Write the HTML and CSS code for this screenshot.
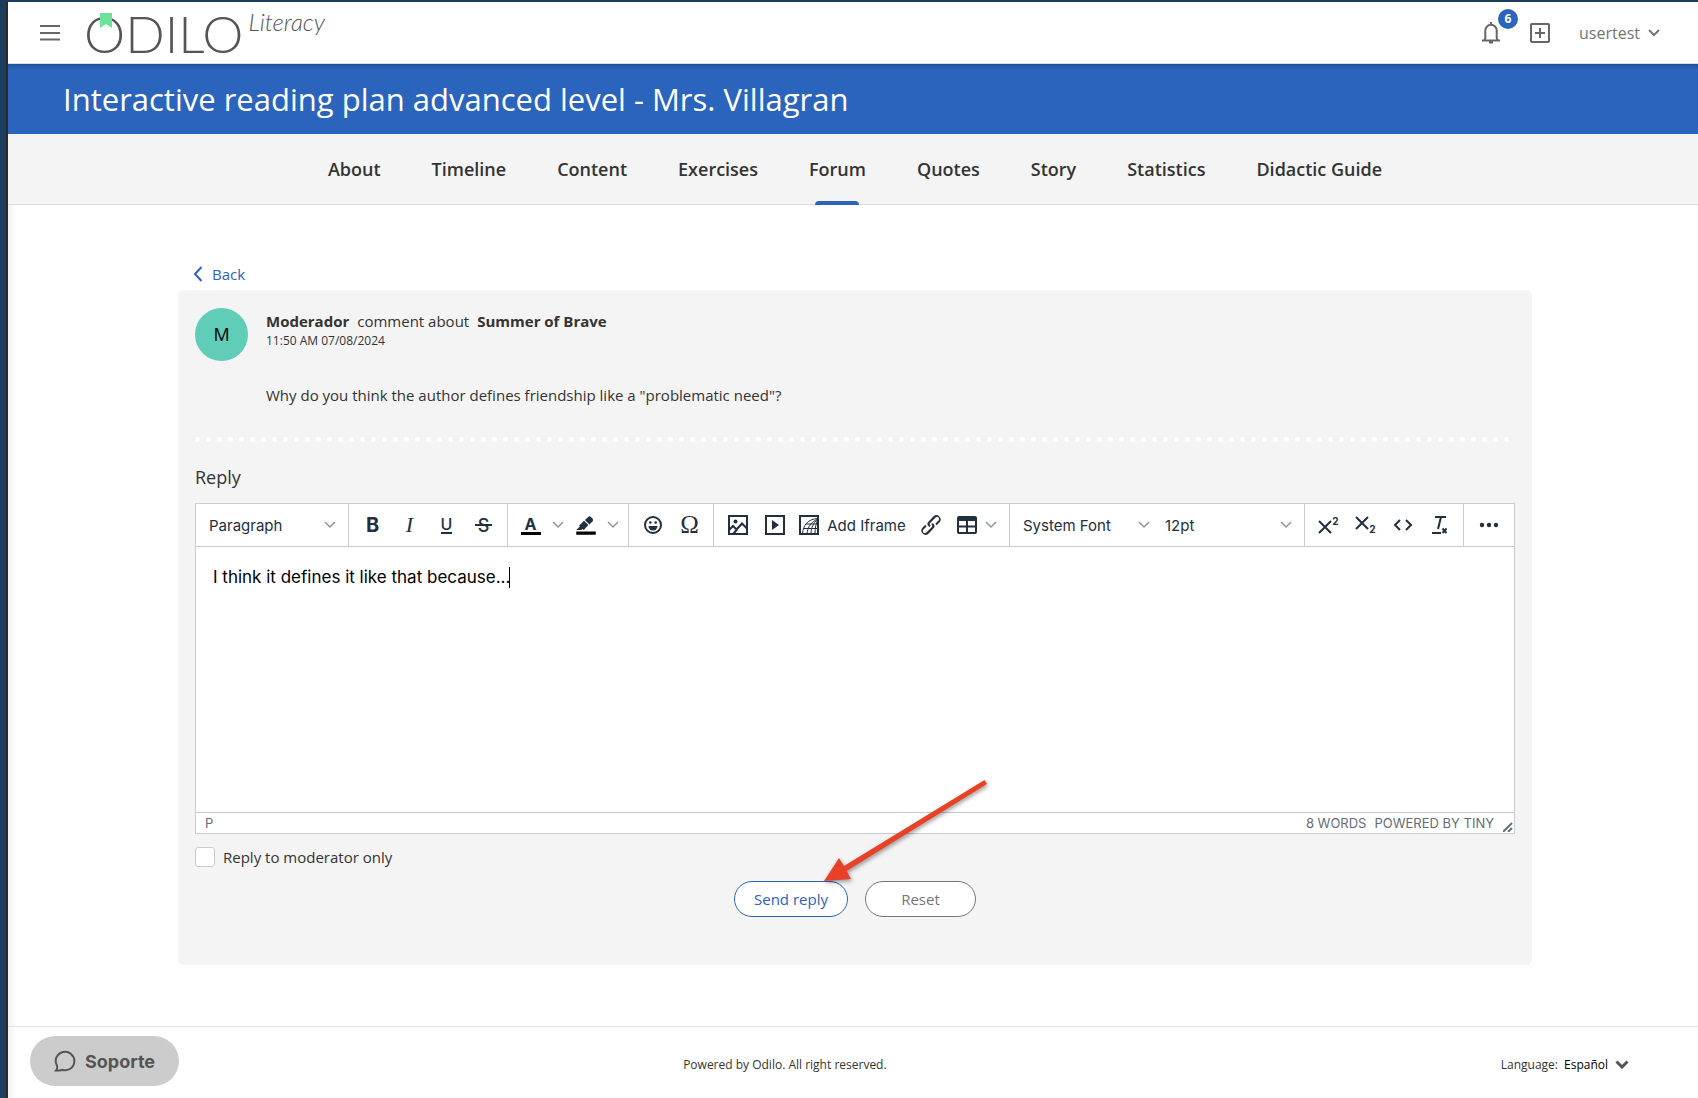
FILE: index.html
```html
<!DOCTYPE html>
<html lang="en">
<head>
    <meta charset="UTF-8">
    <meta name="viewport" content="width=device-width, initial-scale=1.0">
    <title>Forum - Odilo Literacy</title>
    <link rel="stylesheet" href="styles.css">
</head>
<body>
    <div class="page">
        <header class="header">
            <button class="icon-button menu" aria-label="Menu">
                <svg width="20" height="20" viewBox="0 0 20 20"><path d="M0 3h20M0 10h20M0 16.500h20"/></svg>
            </button>
            <a class="logo" href="#">
                <span class="logo-name">ODILO</span>
                <span class="logo-product">Literacy</span>
                <svg class="logo-mark" width="12" height="15" viewBox="0 0 12 15"><path d="M0 0h12v15l-6-4-6 4z"/></svg>
            </a>
            <div class="header-right">
                <button class="icon-button bell" aria-label="Notifications">
                    <svg width="20" height="22" viewBox="0 0 20 22"><path d="M1 18.500h18M3.500 18l.8-2V8.500a5.700 5.700 0 0 1 11.400 0V16l.8 2M10 3V0M8 20.500h4"/></svg>
                    <span class="badge">6</span>
                </button>
                <button class="icon-button" aria-label="Add">
                    <svg width="20" height="20" viewBox="0 0 20 20"><rect x="1" y="1" width="18" height="18" rx="1"/><path d="M10 5v10M5 10h10"/></svg>
                </button>
                <button class="user">usertest
                    <svg width="12" height="8" viewBox="0 0 12 8"><path d="M1 1l5 5 5-5"/></svg>
                </button>
            </div>
        </header>

        <h1 class="banner">Interactive reading plan advanced level - Mrs. Villagran</h1>

        <nav class="tabs">
            <a href="#">About</a>
            <a href="#">Timeline</a>
            <a href="#">Content</a>
            <a href="#">Exercises</a>
            <a href="#" class="active">Forum</a>
            <a href="#">Quotes</a>
            <a href="#">Story</a>
            <a href="#">Statistics</a>
            <a href="#">Didactic Guide</a>
        </nav>

        <main class="main">
            <a class="back" href="#">
                <svg width="10" height="16" viewBox="0 0 10 16"><path d="M8.500 1L2 8l6.500 7"/></svg>
                Back
            </a>
            <section class="card">
                <article class="comment">
                    <div class="avatar">M</div>
                    <div class="comment-content">
                        <p class="comment-title"><b>Moderador</b><span>comment about</span><b>Summer of Brave</b></p>
                        <p class="comment-date">11:50 AM 07/08/2024</p>
                        <p class="comment-text">Why do you think the author defines friendship like a "problematic need"?</p>
                    </div>
                </article>
                <div class="dots"></div>

                <form>
                    <label class="reply-label" for="reply">Reply</label>
                    <div class="editor">
                        <div class="toolbar">
                            <div class="group">
                                <div class="picker">
                                    <select aria-label="Block"><option>Paragraph</option></select>
                                    <svg class="chevron" width="12" height="8" viewBox="0 0 12 8"><path d="M1 1l5 5 5-5"/></svg>
                                </div>
                            </div>
                            <div class="group">
                                <button type="button" class="tool bold">B</button>
                                <button type="button" class="tool italic">I</button>
                                <button type="button" class="tool underline"><span>U</span></button>
                                <button type="button" class="tool strike"><span>S</span></button>
                            </div>
                            <div class="group">
                                <button type="button" class="tool split">
                                    <span class="text-color">A</span>
                                    <svg class="chevron" width="12" height="8" viewBox="0 0 12 8"><path d="M1 1l5 5 5-5"/></svg>
                                </button>
                                <button type="button" class="tool split" aria-label="Background color">
                                    <svg class="solid" width="26" height="26" viewBox="0 0 24 24"><path d="M3 18h18v3H3z" fill="#000"/><path d="M7.700 16.700H3l3.300-3.300-.7-.8L10.200 8l4 4.100-4 4.200c-.2.2-.6.2-.8 0l-.6-.7-1.100 1.100zm5-7.500L11 7.400l3-2.900a2 2 0 0 1 2.600 0L18 6c.7.7.7 2 0 2.700l-2.900 2.900-1.800-1.800-.5-.6"/></svg>
                                    <svg class="chevron" width="12" height="8" viewBox="0 0 12 8"><path d="M1 1l5 5 5-5"/></svg>
                                </button>
                            </div>
                            <div class="group">
                                <button type="button" class="tool" aria-label="Emojis">
                                    <svg width="20" height="20" viewBox="0 0 20 20"><circle cx="10" cy="10" r="8"/><g class="solid"><circle cx="7.300" cy="7.500" r="1.300"/><circle cx="12.700" cy="7.500" r="1.300"/><path d="M5.500 11h9a4.500 4.500 0 0 1-9 0z"/></g></svg>
                                </button>
                                <button type="button" class="tool omega">&Omega;</button>
                            </div>
                            <div class="group">
                                <button type="button" class="tool" aria-label="Image">
                                    <svg width="20" height="20" viewBox="0 0 20 20"><rect x="1" y="1" width="18" height="18"/><circle class="solid" cx="7.500" cy="6.500" r="2"/><path d="M1 15l4-4 3.500 3.500L14 8.500l5 5M5 19l4-4.500"/></svg>
                                </button>
                                <button type="button" class="tool" aria-label="Media">
                                    <svg width="20" height="20" viewBox="0 0 20 20"><rect x="1" y="1" width="18" height="18"/><path class="solid" d="M7 5l7 5-7 5z"/></svg>
                                </button>
                                <button type="button" class="tool iframe">
                                    <svg width="20" height="20" viewBox="0 0 20 20"><rect x="1" y="1" width="18" height="18"/><g class="thin"><path d="M3.500 19C4 10 9 4 19 3.500M8 19c.5-7 4-12 11-15M12 19c0-6 2-11 7-15M16 19c0-6 1-11 3-15M7 9h12M5 13.500h14"/></g></svg>
                                    Add Iframe
                                </button>
                                <button type="button" class="tool" aria-label="Link">
                                    <svg class="solid" width="26" height="26" viewBox="0 0 24 24"><path d="M6.200 12.300a1 1 0 0 1 1.400 1.400l-2 2a2 2 0 1 0 2.600 2.800l4.800-4.800a1 1 0 0 0 0-1.400 1 1 0 1 1 1.400-1.300 2.900 2.900 0 0 1 0 4L9.600 20a3.900 3.900 0 0 1-5.500-5.500l2-2zm11.600-.6a1 1 0 0 1-1.400-1.400l2-2a2 2 0 1 0-2.600-2.800L11 10.300a1 1 0 0 0 0 1.400A1 1 0 1 1 9.600 13a2.900 2.900 0 0 1 0-4L14.400 4a3.900 3.900 0 0 1 5.500 5.500l-2 2z"/></svg>
                                </button>
                                <button type="button" class="tool split" aria-label="Table">
                                    <svg width="20" height="18" viewBox="0 0 20 18"><rect x="1" y="1" width="18" height="16" rx="1"/><path d="M10 5v12M1 10.500h18"/><path class="solid" d="M1 1h18v4H1z"/></svg>
                                    <svg class="chevron" width="12" height="8" viewBox="0 0 12 8"><path d="M1 1l5 5 5-5"/></svg>
                                </button>
                            </div>
                            <div class="group">
                                <div class="picker">
                                    <select aria-label="Font"><option>System Font</option></select>
                                    <svg class="chevron" width="12" height="8" viewBox="0 0 12 8"><path d="M1 1l5 5 5-5"/></svg>
                                </div>
                                <div class="picker">
                                    <select aria-label="Font size"><option>12pt</option></select>
                                    <svg class="chevron" width="12" height="8" viewBox="0 0 12 8"><path d="M1 1l5 5 5-5"/></svg>
                                </div>
                            </div>
                            <div class="group">
                                <button type="button" class="tool script-up" aria-label="Superscript">
                                    <svg width="14" height="14" viewBox="0 0 14 14"><path d="M1 1l12 12M13 1L1 13"/></svg><span>2</span>
                                </button>
                                <button type="button" class="tool script-down" aria-label="Subscript">
                                    <svg width="14" height="14" viewBox="0 0 14 14"><path d="M1 1l12 12M13 1L1 13"/></svg><span>2</span>
                                </button>
                                <button type="button" class="tool" aria-label="Source code">
                                    <svg width="20" height="14" viewBox="0 0 20 14"><path d="M7 2L2 7l5 5M13 2l5 5-5 5"/></svg>
                                </button>
                                <button type="button" class="tool clear-format" aria-label="Clear formatting">
                                    <svg width="20" height="20" viewBox="0 0 20 20"><path d="M5 2h11M11 2L8 14M2 18h9M12.500 13.500l4 4.500M16.500 13.500l-4 4.500"/></svg>
                                </button>
                            </div>
                            <div class="group last">
                                <button type="button" class="tool" aria-label="More">
                                    <svg class="solid" width="20" height="6" viewBox="0 0 20 6"><circle cx="3" cy="3" r="2.200"/><circle cx="10" cy="3" r="2.200"/><circle cx="17" cy="3" r="2.200"/></svg>
                                </button>
                            </div>
                        </div>
                        <div class="editor-body">
                            <textarea id="reply" spellcheck="false">I think it defines it like that because...</textarea>
                            <span class="caret"></span>
                        </div>
                        <div class="statusbar">
                            <span>P</span>
                            <span class="words">8 WORDS</span>
                            <a href="#">POWERED BY TINY</a>
                            <svg width="10" height="10" viewBox="0 0 10 10"><path d="M0 10L9 1M5 10l4-4"/></svg>
                        </div>
                    </div>
                    <div class="check">
                        <input type="checkbox" id="moderator-only">
                        <label for="moderator-only">Reply to moderator only</label>
                    </div>
                    <div class="actions">
                        <button type="submit" class="btn btn-send">Send reply</button>
                        <button type="reset" class="btn btn-reset">Reset</button>
                        <svg class="arrow" width="170" height="110" viewBox="0 0 170 110"><path d="M160.500 1L20 87 15 79 0 102l27-2-4.500-8L163 5z"/></svg>
                    </div>
                </form>
            </section>
        </main>

        <footer class="footer">
            <p class="copyright">Powered by Odilo. All right reserved.</p>
            <label for="language">Language:</label>
            <div class="language">
                <select id="language"><option>Español</option></select>
                <svg width="14" height="9" viewBox="0 0 14 9"><path d="M1.500 1.500L7 7l5.500-5.500"/></svg>
            </div>
        </footer>
    </div>

    <button class="support">
        <svg width="22" height="22" viewBox="0 0 22 22"><path d="M2 20.500c1.500-1.500 1.500-3 .9-5A9.300 9.300 0 1 1 8 19.800c-2 .9-4 .9-6 .7z"/></svg>
        Soporte
    </button>
</body>
</html>
```
FILE: styles.css
```css
* {
    box-sizing: border-box;
}

body {
    margin: 0;
    padding: 2px 0 0 6px;
    background: #1d3d5d;
    color: #333;
    font-family: "Open Sans", "Noto Sans", sans-serif;
    font-size: 15px;
}

p {
    margin: 0;
}

a {
    color: inherit;
    text-decoration: none;
}

button,
select,
textarea {
    font: inherit;
    color: inherit;
    border: none;
    background: none;
    padding: 0;
    cursor: pointer;
}

select {
    appearance: none;
}

svg {
    flex: none;
    fill: none;
    stroke: currentColor;
    stroke-width: 2;
}

.solid {
    fill: currentColor;
    stroke: none;
}

.page {
    min-height: calc(100vh - 2px);
    display: flex;
    flex-direction: column;
    border-left: 2px solid #2a2a2c;
    background: linear-gradient(to right, #f1f1f1, #fff 8px);
}

/* header */
.header {
    height: 62px;
    display: flex;
    align-items: center;
    padding: 0 38px 0 32px;
    background: #fff;
    border-bottom: 1px solid #dcdfe4;
}

.icon-button {
    display: flex;
    position: relative;
    color: #666;
}

.logo {
    position: relative;
    display: flex;
    align-items: flex-start;
    gap: 5px;
    margin-left: 24px;
    font-family: Lato, sans-serif;
    font-weight: 300;
    color: #555;
}

.logo-name {
    font-size: 52px;
    line-height: 58px;
}

.logo-product {
    font-size: 24px;
    line-height: 36px;
    font-style: italic;
}

.logo-mark {
    position: absolute;
    left: 16px;
    top: 9px;
    fill: #6ce39a;
    stroke: none;
}

.header-right {
    display: flex;
    align-items: center;
    gap: 29px;
    margin-left: auto;
    color: #757575;
}

.badge {
    position: absolute;
    left: 17px;
    top: -13px;
    width: 20px;
    height: 20px;
    border-radius: 50%;
    background: #2a64bc;
    color: #fff;
    font-size: 12px;
    font-weight: 700;
    line-height: 20px;
    text-align: center;
}

.user {
    display: flex;
    align-items: center;
    gap: 8px;
    font-size: 16px;
}

.banner {
    margin: 0;
    padding: 1px 55px 0;
    background: #2a64bc;
    box-shadow: inset 0 5px 5px -4px rgba(0, 0, 0, 0.3);
    color: #fff;
    font-size: 31px;
    font-weight: 400;
    line-height: 69px;
}

.tabs {
    display: flex;
    justify-content: center;
    gap: 51px;
    padding: 1px 0 0 4px;
    background: #f4f4f4;
    border-bottom: 1px solid #dcdcdc;
    font-size: 18px;
    font-weight: 600;
    line-height: 69px;
}

.tabs .active {
    position: relative;
}

.tabs .active::after {
    content: "";
    position: absolute;
    left: calc(50% - 22px);
    bottom: -1px;
    width: 44px;
    height: 4px;
    border-radius: 4px 4px 0 0;
    background: #2a64bc;
}

/* main */
.main {
    flex: 1;
    padding: 57px 166px 60px 170px;
}

.back {
    display: inline-flex;
    align-items: center;
    gap: 9px;
    margin-left: 15px;
    line-height: 24px;
    color: #2a64bc;
}

.card {
    margin-top: 4px;
    padding: 18px 17px 48px;
    border-radius: 6px;
    background: #f4f4f4;
}

.comment {
    display: flex;
    gap: 18px;
}

.avatar {
    width: 53px;
    height: 53px;
    border-radius: 50%;
    background: #5fcdb7;
    color: #000;
    font-size: 18px;
    line-height: 53px;
    text-align: center;
}

.comment-title {
    display: flex;
    gap: 8px;
    margin-top: 2px;
    line-height: 22px;
}

.comment-date {
    font-size: 12px;
    line-height: 18px;
}

.comment-text {
    margin-top: 33px;
    line-height: 24px;
}

.dots {
    height: 5px;
    margin: 30px 0 23px;
    background: radial-gradient(circle, #fff 2px, transparent 3px) -3px 0 / 11px 5px repeat-x;
}

.reply-label {
    display: block;
    font-size: 18px;
    line-height: 24px;
}

.editor {
    margin-top: 14px;
    border: 1px solid #ccc;
    background: #fff;
    color: #222f3e;
    font-family: Inter, sans-serif;
    font-size: 15px;
}

.toolbar {
    display: flex;
    height: 43px;
    border-bottom: 1px solid #ccc;
}

.group {
    display: flex;
    align-items: center;
    padding: 0 5px;
    border-right: 1px solid #ccc;
}

.group.last {
    flex: 1;
    justify-content: center;
    border-right: none;
}

.picker {
    position: relative;
    width: 142px;
}

.picker select {
    width: 100%;
    height: 36px;
    padding-left: 8px;
}

.picker .chevron {
    position: absolute;
    right: 7px;
    top: 14px;
    pointer-events: none;
}

.chevron {
    color: #8f959c;
    stroke-width: 1.5;
}

.tool {
    display: flex;
    align-items: center;
    justify-content: center;
    width: 37px;
    height: 36px;
    font-size: 20px;
}

.tool.split {
    width: 55px;
    gap: 8px;
}

.tool.iframe {
    width: 119px;
    gap: 8px;
    font-size: 15px;
}

.bold {
    font-weight: 700;
}

.italic {
    font-family: "Liberation Serif", serif;
    font-style: italic;
    font-size: 22px;
}

.underline,
.strike {
    font-weight: 500;
    font-size: 18px;
}

.underline span {
    border-bottom: 2px solid;
    font-size: 16px;
    line-height: 15px;
}

.strike span {
    padding: 0 3px;
    background: linear-gradient(currentColor, currentColor) center / 100% 2px no-repeat;
}

.omega {
    font-family: "Liberation Serif", serif;
    font-size: 25px;
}

.text-color {
    width: 20px;
    margin: 0 3px;
    border-bottom: 3px solid #000;
    font-size: 16px;
    font-weight: 700;
    line-height: 16px;
}

.thin {
    stroke-width: 1;
}

.script-up span,
.script-down span {
    font-size: 10px;
    font-weight: 700;
    line-height: 10px;
}

.script-up {
    align-items: flex-end;
    padding-bottom: 9px;
}

.script-up span {
    padding-bottom: 8px;
}

.script-down {
    align-items: flex-start;
    padding-top: 9px;
}

.script-down span {
    padding-top: 8px;
}

.editor-body {
    position: relative;
    height: 265px;
}

.editor-body textarea {
    display: block;
    width: 100%;
    height: 100%;
    padding: 18px 17px;
    resize: none;
    outline: none;
    color: #000;
    font-size: 17px;
    line-height: 24px;
    cursor: text;
}

.caret {
    position: absolute;
    left: 313px;
    top: 20px;
    width: 1px;
    height: 21px;
    background: #000;
}

.statusbar {
    display: flex;
    align-items: center;
    height: 21px;
    padding: 0 1px 0 9px;
    border-top: 1px solid #ccc;
    color: #646d78;
    font-size: 13px;
}

.words {
    margin: 0 8px 0 auto;
}

.statusbar svg {
    align-self: flex-end;
    margin: 0 0 1px 9px;
}

.check {
    display: flex;
    align-items: center;
    gap: 8px;
    margin-top: 11px;
    line-height: 24px;
}

.check input {
    appearance: none;
    width: 20px;
    height: 20px;
    margin: 0;
    border: 1px solid #ccc;
    border-radius: 3px;
    background: #fff;
}

.actions {
    position: relative;
    display: flex;
    justify-content: center;
    gap: 17px;
    margin-top: 12px;
}

.btn {
    height: 36px;
    border: 1px solid;
    border-radius: 18px;
    background: #fff;
}

.btn-send {
    width: 114px;
    color: #2a64bc;
}

.btn-reset {
    width: 111px;
    color: #757575;
}

/* arrow pointing at the send button */
.arrow {
    position: absolute;
    left: calc(50% - 31px);
    bottom: 28px;
    fill: #e94127;
    stroke: none;
    filter: drop-shadow(1px 2px 2px rgba(0, 0, 0, 0.4));
    pointer-events: none;
}

/* footer */
.footer {
    display: flex;
    align-items: center;
    height: 72px;
    padding: 4px 69px 0 61px;
    border-top: 1px solid #e2e2e2;
    font-size: 12px;
}

.copyright {
    flex: 1;
    text-align: center;
}

.language {
    display: flex;
    align-items: center;
    margin-left: 6px;
    color: #000;
}

.language svg {
    margin-left: 6px;
    color: #555;
    stroke-width: 3;
}

.support {
    position: fixed;
    left: 30px;
    bottom: 12px;
    display: flex;
    align-items: center;
    justify-content: center;
    gap: 9px;
    width: 149px;
    height: 50px;
    border-radius: 25px;
    background: #ccc;
    color: #555;
    font-family: Inter, sans-serif;
    font-size: 18px;
    font-weight: 700;
}
```
